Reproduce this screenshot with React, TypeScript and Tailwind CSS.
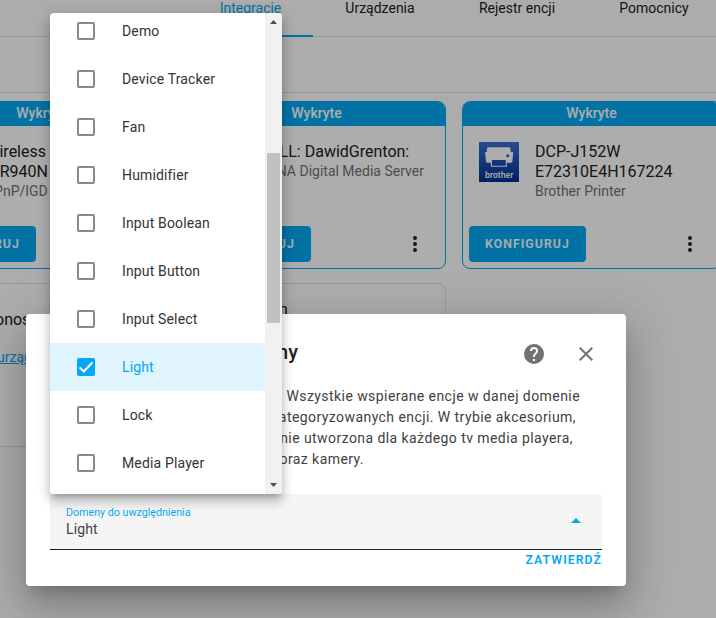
import type { ReactNode } from "react";

const tabs = [
  { label: "Integracje", size: "w-[125px]", active: true },
  { label: "Urządzenia", size: "w-[134px]", active: false },
  { label: "Rejestr encji", size: "w-[140px]", active: false },
  { label: "Pomocnicy", size: "w-[134px]", active: false },
];

const domains = [
  "Demo",
  "Device Tracker",
  "Fan",
  "Humidifier",
  "Input Boolean",
  "Input Button",
  "Input Select",
  "Light",
  "Lock",
  "Media Player",
];

function BrotherLogo() {
  return (
    <svg viewBox="0 0 40 40" className="size-10 shrink-0">
      <defs>
        <linearGradient id="brand" x1="0" y1="0" x2="0" y2="1">
          <stop offset="0" stopColor="#3c6fd4" />
          <stop offset="1" stopColor="#002f92" />
        </linearGradient>
      </defs>
      <rect width="40" height="40" fill="url(#brand)" />
      <path
        fill="#fff"
        d="M9 5.3h21.3q1 0 1.1 1l.3 3.7h1.6q.9 0 .9 1l-.8 8.2q-.2 1.500-1.700 1.500h-3.900v4.100H11.900v-4.100H8.700q-1.500 0-1.700-1.500L6.100 11q0-1 .9-1h.8l.3-3.700q.1-1 .9-1zM13 18v5.800h13.800V18z"
      />
      <circle cx="28.7" cy="13.7" r="1.5" fill="#2456bd" />
      <text
        x="6"
        y="35.5"
        textLength="28.5"
        lengthAdjust="spacingAndGlyphs"
        fill="#fff"
        className="font-['Inter',sans-serif] text-[8.5px] font-semibold"
      >
        brother
      </text>
    </svg>
  );
}

function DotsVertical() {
  return (
    <svg viewBox="0 0 24 24" className="size-6" fill="#212121">
      <path d="M12 16a2 2 0 0 1 2 2 2 2 0 0 1-2 2 2 2 0 0 1-2-2 2 2 0 0 1 2-2m0-6a2 2 0 0 1 2 2 2 2 0 0 1-2 2 2 2 0 0 1-2-2 2 2 0 0 1 2-2m0-6a2 2 0 0 1 2 2 2 2 0 0 1-2 2 2 2 0 0 1-2-2 2 2 0 0 1 2-2z" />
    </svg>
  );
}

function DiscoveredCard({ title, subtitle, logo }: { title: ReactNode; subtitle: string; logo?: ReactNode }) {
  return (
    <div className="flex h-[168px] flex-col overflow-hidden rounded-lg border border-[#03a9f4] bg-white">
      <div className="h-6 shrink-0 bg-[#03a9f4] text-center text-sm leading-[23px] font-medium text-white">Wykryte</div>
      <div className="flex gap-4 px-4 pt-4">
        {logo ?? <div className="size-10 shrink-0" />}
        <div className="whitespace-nowrap">
          <div className="text-base leading-5 text-[#212121]">{title}</div>
          <div className="text-sm leading-[19px] text-[#727272]">{subtitle}</div>
        </div>
      </div>
      <div className="mt-auto flex items-center justify-between pr-[18px] pb-[6px] pl-[6px]">
        <div className="h-9 w-[117px] rounded bg-[#03a9f4] pl-4 text-[12.25px] leading-9 font-semibold tracking-[1.08px] text-white">
          KONFIGURUJ
        </div>
        <DotsVertical />
      </div>
    </div>
  );
}

function Page() {
  return (
    <div className="h-full bg-[#fefefe] text-[#212121]">
      <div className="flex h-[37px] w-[760px] border-b border-[#e0e0e0] pl-[188px] text-sm">
        {tabs.map((t) =>
          t.active ? (
            <div key={t.label} className={`${t.size} h-[37px] shrink-0 border-b-2 border-[#03a9f4] text-center leading-4 text-[#03a9f4]`}>
              {t.label}
            </div>
          ) : (
            <div key={t.label} className={`${t.size} shrink-0 text-center leading-4`}>
              {t.label}
            </div>
          ),
        )}
      </div>
      <div className="h-14 border-b border-[#e0e0e0]" />
      <div className="mt-2 -ml-[88px] grid grid-cols-[259px_259px_259px] gap-x-4 gap-y-[14px]">
        <DiscoveredCard
          title={
            <div className="w-[62px] text-right">
              <div className="-ml-4 w-[77px]">Wireless</div>
              <div className="-ml-4 w-[79px]">WR940N</div>
            </div>
          }
          subtitle="UPnP/IGD"
        />
        <DiscoveredCard title={<div className="w-[149px] text-right">DELL: DawidGrenton:</div>} subtitle="DLNA Digital Media Server" />
        <DiscoveredCard
          logo={<BrotherLogo />}
          title={
            <>
              DCP-J152W
              <br />
              E72310E4H167224
            </>
          }
          subtitle="Brother Printer"
        />
        <div className="h-[164px] rounded-lg border border-[#e0e0e0] bg-white pt-[26px] pl-[82px]">
          <div className="text-base leading-5">onos</div>
          <div className="mt-[17px] ml-[2px] text-sm leading-5 text-[#03a9f4] underline">urządzenie</div>
        </div>
        <div className="h-[164px] rounded-lg border border-[#e0e0e0] bg-white pt-4 pl-[91px]">
          <div className="text-base leading-5">n</div>
        </div>
      </div>
    </div>
  );
}

function Dialog() {
  return (
    <div className="absolute top-[314px] left-[26px] h-[272px] w-[600px] rounded bg-white px-6 shadow-[0_11px_15px_-7px_rgba(0,0,0,0.2),0_24px_38px_3px_rgba(0,0,0,0.14),0_9px_46px_8px_rgba(0,0,0,0.12)]">
      <div className="flex h-[72px] items-center pt-2">
        <div className="-mt-[5px] w-[248px] text-right text-xl font-medium text-[#212121]">domeny</div>
        <svg viewBox="0 0 24 24" className="ml-56 size-6" fill="#727272">
          <path d="M15.07 11.25l-.9.92C13.45 12.89 13 13.5 13 15h-2v-.5c0-1.11.45-2.11 1.17-2.83l1.24-1.26c.37-.36.59-.86.59-1.41a2 2 0 0 0-2-2 2 2 0 0 0-2 2H8a4 4 0 0 1 4-4 4 4 0 0 1 4 4c0 .88-.36 1.67-.93 2.25M13 19h-2v-2h2M12 2A10 10 0 0 0 2 12a10 10 0 0 0 10 10 10 10 0 0 0 10-10c0-5.53-4.5-10-10-10z" />
        </svg>
        <svg viewBox="0 0 24 24" className="ml-7 size-6" fill="#727272">
          <path d="M19 6.41 17.59 5 12 10.59 6.41 5 5 6.41 10.59 12 5 17.59 6.41 19 12 13.41 17.59 19 19 17.59 13.41 12 19 6.41z" />
        </svg>
      </div>
      <div className="text-right text-sm leading-[21px] tracking-[0.43px] whitespace-nowrap text-[#414141]">
        <div className="w-[530px]">Wszystkie wspierane encje w danej domenie</div>
        <div className="w-[526px]">ategoryzowanych encji. W trybie akcesorium,</div>
        <div className="w-[523px]">nie utworzona dla każdego tv media playera,</div>
        <div className="w-[314px]">oraz kamery.</div>
      </div>
      <div className="mt-6 flex h-14 items-center justify-between rounded-t border-b border-[#1c1c1c] bg-[#f5f5f5] px-4">
        <div>
          <div className="text-[10.7px] leading-4 text-[#03a9f4]">Domeny do uwzględnienia</div>
          <div className="-mt-px mb-px text-sm leading-[18px] tracking-[0.15px] text-[#414141]">Light</div>
        </div>
        <svg viewBox="0 0 10 5" className="mr-[5px] mb-[2px] h-[5px] w-[10px]" fill="#03a9f4">
          <path d="M0 5 5 0l5 5z" />
        </svg>
      </div>
      <div className="mt-[2px] text-right text-[12.25px] leading-4 font-semibold tracking-[1.08px] text-[#03a9f4]">ZATWIERDŹ</div>
    </div>
  );
}

function DomainMenu() {
  return (
    <div className="absolute top-[13px] left-[50px] h-[481px] w-[232px] rounded shadow-[0_5px_5px_-3px_rgba(0,0,0,0.2),0_8px_10px_1px_rgba(0,0,0,0.14),0_3px_14px_2px_rgba(0,0,0,0.12)]">
      <div className="flex h-full overflow-hidden rounded bg-white">
        <div className="-mt-[6px] flex-1">
          {domains.map((name) =>
            name === "Light" ? (
              <div key={name} className="flex h-12 items-center gap-[27px] bg-[#e0f4fd] pl-[27px] text-sm tracking-[0.15px] text-[#03a9f4]">
                <div className="size-[18px] rounded-xs bg-[#03a9f4]">
                  <svg viewBox="0 0 24 24" className="size-[18px]" fill="none" stroke="#fff" strokeWidth="2.8">
                    <path d="M3.5 12.5 9 18 20.5 6" />
                  </svg>
                </div>
                {name}
              </div>
            ) : (
              <div key={name} className="flex h-12 items-center gap-[27px] pl-[27px] text-sm tracking-[0.15px] text-[#333]">
                <div className="size-[18px] rounded-xs border-2 border-[#8a8a8a]" />
                {name}
              </div>
            ),
          )}
        </div>
        <div className="flex w-[17px] flex-col items-center bg-[#f1f1f1]">
          <svg viewBox="0 0 7 4" className="mt-[7px] h-1 w-[7px]" fill="#505050">
            <path d="M0 4 3.5 0 7 4z" />
          </svg>
          <div className="mt-[129px] h-[170px] w-[13px] bg-[#c1c1c1]" />
          <svg viewBox="0 0 7 4" className="mt-auto mb-[7px] h-1 w-[7px]" fill="#505050">
            <path d="M0 0 3.5 4 7 0z" />
          </svg>
        </div>
      </div>
    </div>
  );
}

export default function App() {
  return (
    <div className="relative h-[618px] w-[716px] overflow-hidden font-['Roboto',sans-serif]">
      <Page />
      <div className="absolute inset-0 bg-black/32" />
      <Dialog />
      <DomainMenu />
    </div>
  );
}
